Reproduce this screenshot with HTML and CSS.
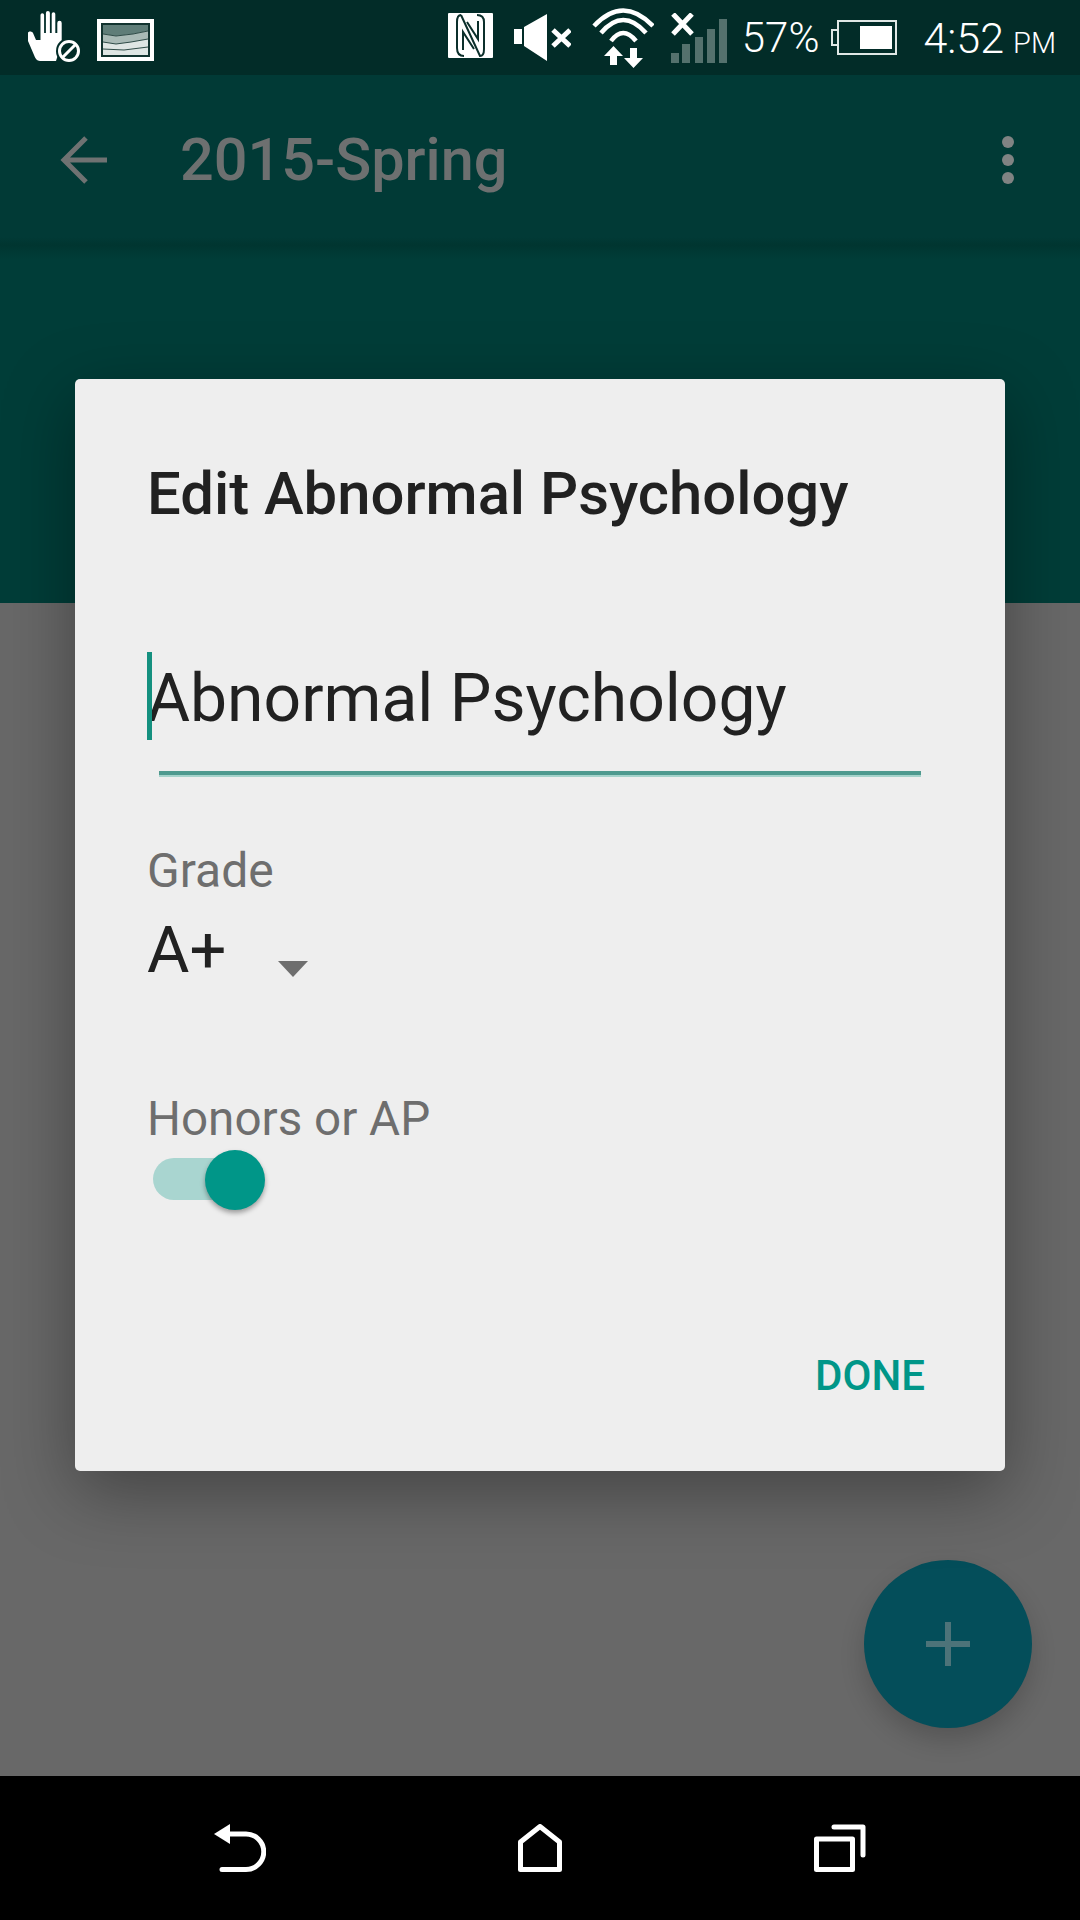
FILE: index.html
```html
<!DOCTYPE html>
<html>

<head>
  <title>2015-Spring</title>
  <link rel="stylesheet" href="styles.css">
</head>

<body>
  <div class="screen">
    <div class="status-bar">
      <div class="status-left">
        <svg class="icon-hand" viewBox="0 0 56 54">
          <path fill="#fff" d="M14.500 4a1.800 1.800 0 0 1 3.600 0V22h1.800V2a2 2 0 0 1 4 0V22h1.800V3a1.800 1.800 0 0 1 3.600 0V22h2V12a2.200 2.200 0 0 1 4.400 0V32L30 50H14C11 50 9 47 8 44L2 30V22C2 20 6 20 7 22L10 29H14.500z"/>
          <circle cx="43" cy="40" r="13" fill="#022c28"/>
          <circle cx="43" cy="40" r="9.500" fill="none" stroke="#fff" stroke-width="3"/>
          <path d="M37 46l12-12" stroke="#fff" stroke-width="3"/>
        </svg>
        <svg class="icon-picture" viewBox="0 0 57 42">
          <rect width="57" height="42" fill="#fff"/>
          <rect x="4" y="4" width="49" height="34" fill="#12332f"/>
          <rect x="6" y="6" width="45" height="30" fill="#dfe6e4"/>
          <path fill="#5f7d78" d="M6 6h45v6l-15 3-17 2-13-2z"/>
          <path fill="#a9bab6" d="M6 15l13 2 17-2 15-3v8l-17 3-15 2-13-2z"/>
          <path fill="none" stroke="#2e4b47" stroke-width="1" d="M6 15l13 2 17-2 15-3M6 23l13 2 15-2 17-3M6 30l21 1 24-3"/>
        </svg>
      </div>
      <div class="status-right">
        <svg class="icon-nfc" viewBox="0 0 45 45">
          <rect width="45" height="45" rx="1" fill="#fff"/>
          <path fill="none" stroke="#0b2f2b" stroke-width="2" d="M13 2C9 2 9 6 9 9V35C9 41 12 43 16 43M13 2L32 43C36 43 36 39 36 36V9C36 4 33 2 29 2"/>
          <path fill="none" stroke="#0b2f2b" stroke-width="2" d="M15 37V19L26 36M30 8V26L19 9"/>
        </svg>
        <svg class="icon-sound" viewBox="0 0 57 47">
          <path fill="#fff" d="M0 15h8v15H0zM10 13L33 0v47L10 32z"/>
          <path stroke="#fff" stroke-width="5" d="M39 16l17 16M56 16L39 32"/>
        </svg>
        <svg class="icon-wifi" viewBox="0 0 62 60">
          <path fill="none" stroke="#fff" stroke-width="4.500" d="M2 18Q31-13 61 18M9 25Q31-1 54 25M19 33Q31 17 44 33"/>
          <path fill="#fff" d="M21.500 38L31 48H25V57H18V48H12zM38 40H45V50H51L41.500 60 32 50H38z"/>
        </svg>
        <svg class="icon-signal" viewBox="0 0 56 50">
          <path fill="#54716d" d="M0 40h8v10H0zM11 31h8v19h-8zM24 24h8v26h-8zM36 16h8v34h-8zM48 6h8v44h-8z"/>
          <path stroke="#fff" stroke-width="5" d="M2 1l19 20M21 1L2 21"/>
        </svg>
        <span class="battery-text">57%</span>
        <div class="battery">
          <div class="battery-nub"></div>
          <div class="battery-body">
            <div class="battery-level"></div>
          </div>
        </div>
        <span class="clock">4:52<span class="clock-ampm">PM</span></span>
      </div>
    </div>

    <div class="toolbar">
      <svg class="back-arrow" viewBox="0 0 48 48">
        <path fill="none" stroke="#6f7272" stroke-width="5" d="M47 24H4M26 2L4 24l22 22"/>
      </svg>
      <span class="toolbar-title">2015-Spring</span>
      <div class="overflow">
        <div class="overflow-dot"></div>
        <div class="overflow-dot"></div>
        <div class="overflow-dot"></div>
      </div>
    </div>
    <div class="header-band"></div>

    <div class="content"></div>

    <div class="nav-bar">
      <svg class="nav-back" viewBox="0 0 52 48">
        <path fill="#fff" d="M0 10L16 0v20z"/>
        <path fill="none" stroke="#fff" stroke-width="5" stroke-linecap="round" d="M12 10h20a17.500 17.500 0 0 1 0 35.500H8"/>
      </svg>
      <svg class="nav-home" viewBox="0 0 44 48">
        <path fill="none" stroke="#fff" stroke-width="5" stroke-linejoin="round" d="M2.500 45.500V18L22 2.500 41.500 18v27.500z"/>
      </svg>
      <svg class="nav-recent" viewBox="0 0 52 48">
        <rect x="2.500" y="15" width="36" height="30.500" fill="none" stroke="#fff" stroke-width="5" stroke-linejoin="round"/>
        <path fill="none" stroke="#fff" stroke-width="5" stroke-linecap="round" stroke-linejoin="round" d="M20 3h29v28"/>
      </svg>
    </div>

    <div class="fab">
      <svg class="fab-plus" viewBox="0 0 44 44">
        <path stroke="#4d7379" stroke-width="6" d="M22 0v44M0 22h44"/>
      </svg>
    </div>

    <div class="dialog">
      <h2 class="dialog-title">Edit Abnormal Psychology</h2>
      <div class="name-field">
        <div class="cursor"></div>
        <span class="name-value">Abnormal Psychology</span>
      </div>
      <div class="name-line"></div>
      <div class="field-label grade-label">Grade</div>
      <div class="spinner">
        <span class="spinner-value">A+</span>
        <div class="spinner-arrow"></div>
      </div>
      <div class="field-label honors-label">Honors or AP</div>
      <div class="switch">
        <div class="switch-track"></div>
        <div class="switch-thumb"></div>
      </div>
      <div class="dialog-actions">
        <span class="done-btn">DONE</span>
      </div>
    </div>
  </div>
</body>

</html>
```

FILE: styles.css
```css
body {
  margin: 0;
  font-family: Roboto, sans-serif;
  background: #000;
}

.screen {
  position: relative;
  width: 1080px;
  height: 1920px;
  overflow: hidden;
  display: flex;
  flex-direction: column;
}

.status-bar {
  height: 75px;
  flex: none;
  display: flex;
  justify-content: space-between;
  align-items: center;
  background: #022c28;
  color: #fff;
}

.status-left {
  display: flex;
  align-items: center;
  gap: 15px;
  padding-left: 26px;
}

.status-right {
  display: flex;
  align-items: center;
  padding-right: 24px;
}

.icon-hand {
  width: 56px;
  height: 54px;
}

.icon-picture {
  width: 57px;
  height: 42px;
  margin-top: 4px;
}

.icon-nfc {
  width: 45px;
  height: 45px;
  margin-bottom: 4px;
}

.icon-sound {
  width: 57px;
  height: 47px;
  margin-left: 21px;
}

.icon-wifi {
  width: 62px;
  height: 60px;
  margin-left: 21px;
  margin-top: 1px;
}

.icon-signal {
  width: 56px;
  height: 50px;
  margin-left: 17px;
}

.battery-text {
  margin-left: 15px;
  font-size: 42px;
  font-weight: 300;
}

.battery {
  display: flex;
  align-items: center;
  margin-left: 12px;
}

.battery-nub {
  width: 4px;
  height: 13px;
  border: 2px solid #dfe7e5;
  border-right: none;
}

.battery-body {
  box-sizing: border-box;
  width: 60px;
  height: 35px;
  border: 2px solid #dfe7e5;
  display: flex;
  justify-content: flex-end;
  align-items: center;
  padding-right: 3px;
}

.battery-level {
  width: 32px;
  height: 23px;
  background: #fff;
}

.clock {
  margin-left: 26px;
  font-size: 43px;
  font-weight: 300;
}

.clock-ampm {
  margin-left: 9px;
  font-size: 29px;
}

.toolbar {
  height: 170px;
  flex: none;
  display: flex;
  align-items: center;
  background: linear-gradient(#013a36 calc(100% - 8px), #003530);
}

.back-arrow {
  width: 48px;
  height: 48px;
  margin-left: 60px;
}

.toolbar-title {
  margin-left: 72px;
  font-size: 59.400px;
  font-weight: 500;
  color: #6d7070;
}

.overflow {
  margin-left: auto;
  margin-right: 66px;
  display: flex;
  flex-direction: column;
  gap: 6px;
}

.overflow-dot {
  width: 12px;
  height: 12px;
  border-radius: 50%;
  background: #808383;
}

.header-band {
  height: 358px;
  flex: none;
  background: linear-gradient(#003530, #003d38 14px);
}

.content {
  flex: 1;
  background: #686868;
}

.nav-bar {
  height: 144px;
  flex: none;
  background: #000;
  display: flex;
  justify-content: space-between;
  align-items: center;
  padding: 0 214px;
}

.nav-back {
  width: 52px;
  height: 48px;
}

.nav-home {
  width: 44px;
  height: 48px;
}

.nav-recent {
  width: 52px;
  height: 48px;
}

.fab {
  position: absolute;
  left: 864px;
  top: 1560px;
  width: 168px;
  height: 168px;
  border-radius: 50%;
  background: #044e5a;
  display: flex;
  justify-content: center;
  align-items: center;
  box-shadow: 0 12px 24px rgba(0, 0, 0, 0.18);
}

.fab-plus {
  width: 44px;
  height: 44px;
}

.dialog {
  position: absolute;
  left: 75px;
  top: 379px;
  width: 930px;
  height: 1092px;
  box-sizing: border-box;
  padding: 0 73px 0 72px;
  background: #eeeeee;
  border-radius: 5px;
  box-shadow: 0 20px 70px rgba(0, 0, 0, 0.36);
  display: flex;
  flex-direction: column;
}

.dialog-title {
  margin: 81px 0 0;
  font-size: 59.800px;
  line-height: 68px;
  font-weight: 500;
  color: #212121;
}

.name-field {
  margin-top: 124px;
  display: flex;
  align-items: center;
  position: relative;
  height: 88px;
}

.cursor {
  position: absolute;
  left: 0;
  top: 0;
  width: 5px;
  height: 88px;
  background: #14907f;
}

.name-value {
  padding-top: 4px;
  font-size: 66px;
  color: #212121;
}

.name-line {
  margin: 31px 0 0 12px;
  width: 762px;
  height: 6px;
  background: linear-gradient(#4f9a8f 0 60%, #a5d3cb 60%);
}

.field-label {
  font-size: 48px;
  line-height: 52px;
  color: #6e6e6e;
}

.grade-label {
  margin-top: 68px;
}

.spinner {
  display: flex;
  align-items: center;
  margin-top: 15px;
  height: 76px;
}

.spinner-value {
  font-size: 65px;
  color: #212121;
}

.spinner-arrow {
  margin: 37px 0 0 52px;
  width: 0;
  height: 0;
  border-left: 15px solid transparent;
  border-right: 15px solid transparent;
  border-top: 16px solid #6e6e6e;
}

.honors-label {
  margin-top: 105px;
  font-size: 47.600px;
}

.switch {
  position: relative;
  margin-top: 5px;
  height: 60px;
}

.switch-track {
  position: absolute;
  left: 6px;
  top: 8px;
  width: 100px;
  height: 42px;
  border-radius: 21px;
  background: #a9d5d0;
}

.switch-thumb {
  position: absolute;
  left: 58px;
  top: 0;
  width: 60px;
  height: 60px;
  border-radius: 50%;
  background: #009688;
  box-shadow: 0 3px 5px rgba(0, 0, 0, 0.35);
}

.dialog-actions {
  margin-top: auto;
  padding: 0 0 71px;
  display: flex;
  justify-content: flex-end;
}

.done-btn {
  padding-right: 7px;
  font-size: 42px;
  font-weight: 500;
  color: #009688;
}
```
